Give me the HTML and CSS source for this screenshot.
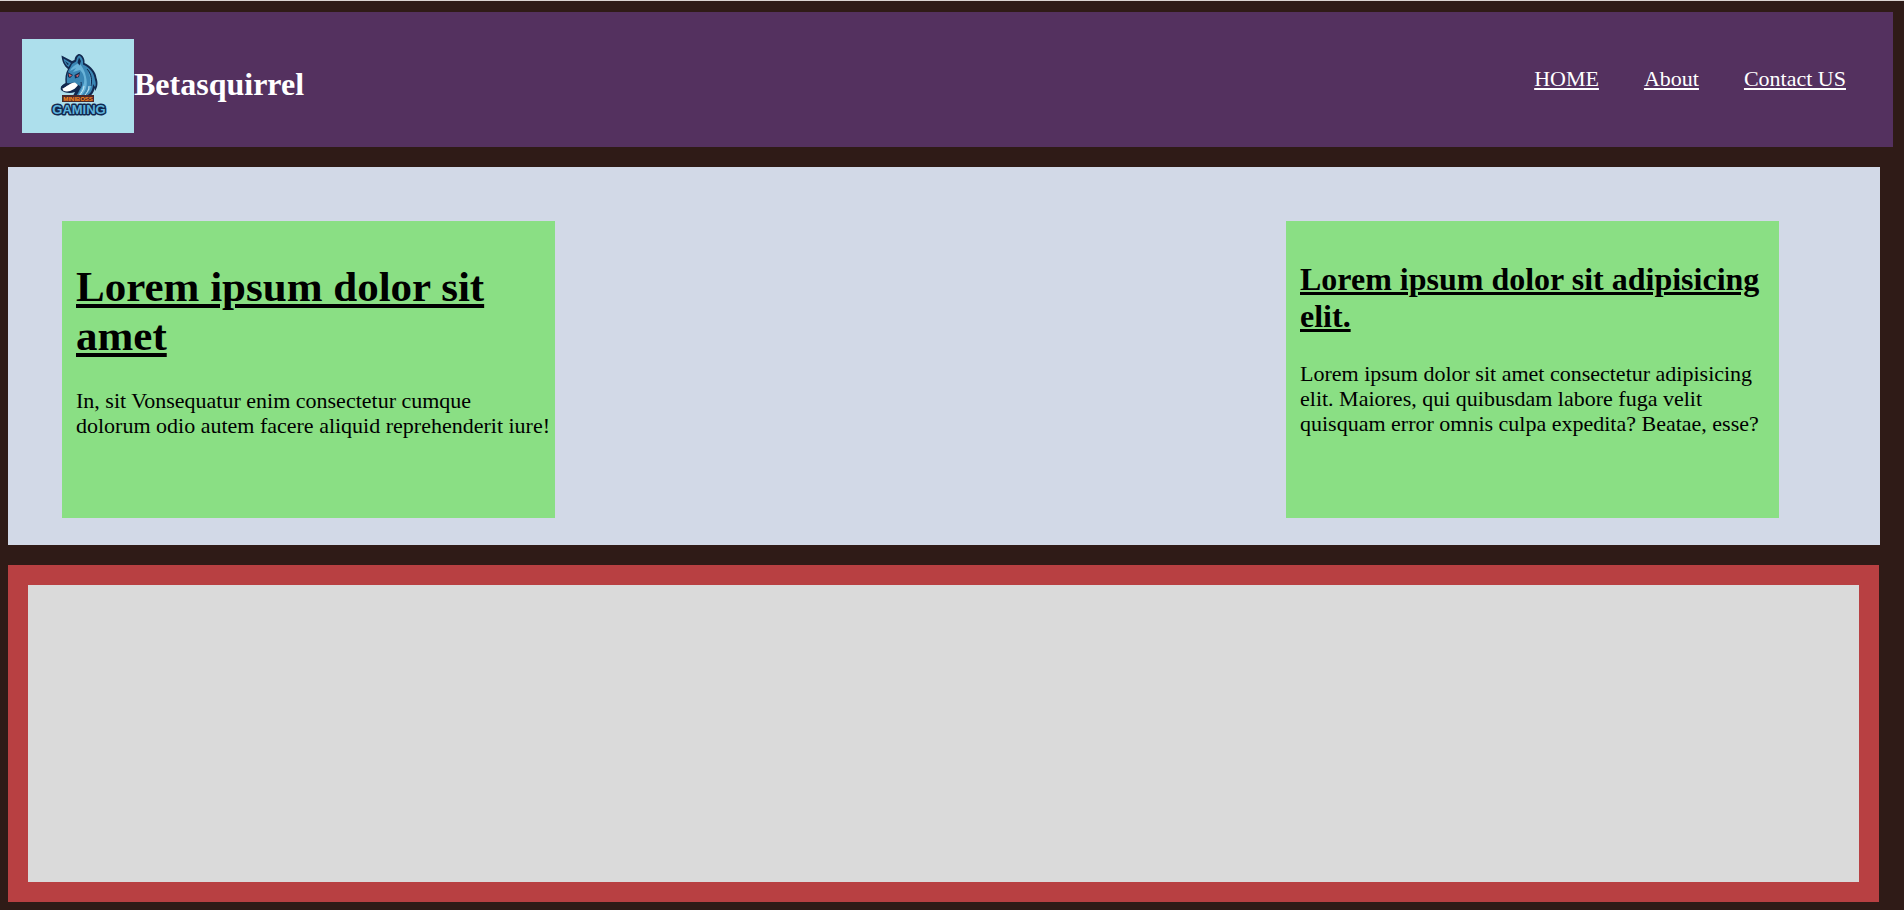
FILE: index.html
```html
<!DOCTYPE html>
<html lang="en">
<head>
<meta charset="utf-8">
<title>Betasquirrel</title>
<link rel="stylesheet" href="styles.css">
</head>
<body>
<header class="site-header">
  <div class="brand">
    <svg class="logo" viewBox="0 0 112 94" role="img" aria-label="Miniboss Gaming">
      <rect width="112" height="94" fill="#addfec"/>
      <path fill="#12294f" d="M39.500 16.500L50 22L52.500 21C53 17.500 55 15 57.500 15C61 16 63 20 62.500 24C69 27 74 33 74.500 39C76 43 76 48 73 52L72.500 49C72 54 69 57 65 59H49C51 57 52 55 53 53C48 55 42 54 39 51C38 48 40 46 43.500 44C43 39 43.500 34 46 30C42 27 40 22 39.500 16.500Z"/>
      <path fill="#3a86b4" d="M41.500 19.500L49 24L46.500 28C43.500 26 42 23 41.500 19.500ZM50 25L54 22.500C55 18.500 56 16.500 57.500 16.500C60 18 61.500 21 61 25.500C68 28.500 72 34 73 41C74 44 74 46 73 48L71 45C71 50 69 55 64 57H54C57 53 58 50 58 47L53 44C50 43 47 45 45 44C44.500 39 45 33 48 29Z"/>
      <path fill="#69b3d8" d="M57 24C52 26 49 29 48 32L54 29L51 33L58 31C61 34 63 38 62 44C60 49 58 53 56 57H59C64 52 66 46 64 38C63 32 60 27 57 24ZM66 33C70 40 69 48 64 55C71 50 71 40 66 33Z"/>
      <path fill="#12294f" d="M57 18.500L59 22L57.500 26.500L55.500 23.500ZM43 22L47 25L45.500 26ZM45.500 33L51 36L48 39L46 38ZM52.500 36L58 33L57 38L53 39.500Z"/>
      <path fill="#d4686a" d="M46.500 34.500L50 36.500L47.500 38ZM53.500 37L57 35L56 38Z"/>
      <path fill="#fff" d="M40.500 49C45 48 48 43.500 53 43.500L56 46C53 51 46 54 41 51.500Z"/>
      <path fill="none" stroke="#12294f" stroke-width="1" d="M59 43C60 47 58 51 53 54M65 30C70 35 70 42 69 47"/>
      <path fill="none" stroke="#c8ebf7" stroke-width="1" d="M62 47C62 51 59 54 57 57M67 47C67 51 65 54 62 57"/>
      <path fill="#12294f" d="M39 47.500L43 45L44 47L41 49.500Z"/>
      <path fill="#4a2a2c" d="M40 56H72V63H40Z"/>
      <text class="logo-top" x="56" y="62">MINIBOSS</text>
      <text class="logo-bottom" x="57" y="75">GAMING</text>
    </svg>
    <h2 class="brand-name">Betasquirrel</h2>
  </div>
  <nav class="nav">
    <a href="#">HOME</a>
    <a href="#">About</a>
    <a href="#">Contact US</a>
  </nav>
</header>
<main>
  <section class="intro">
    <article class="card">
      <h1>Lorem ipsum dolor sit amet</h1>
      <p>In, sit Vonsequatur enim consectetur cumque<br>dolorum odio autem facere aliquid reprehenderit iure!</p>
    </article>
    <article class="card">
      <h2>Lorem ipsum dolor sit adipisicing elit.</h2>
      <p>Lorem ipsum dolor sit amet consectetur adipisicing elit. Maiores, qui quibusdam labore fuga velit quisquam error omnis culpa expedita? Beatae, esse?</p>
    </article>
  </section>
  <section class="frame"></section>
</main>
</body>
</html>
```
FILE: styles.css
```css
* { box-sizing: border-box; }

body {
  margin: 0;
  border-top: 1px solid #dcd5d2;
  background: #2f1b17;
  color: #000;
  font-family: "Liberation Serif", "Times New Roman", serif;
  font-size: 22px;
  line-height: 25px;
}

.site-header {
  display: flex;
  justify-content: space-between;
  align-items: flex-start;
  margin: 11px 11px 20px 0;
  padding: 27px 47px 14px 22px;
  background: #54315f;
  color: #fff;
}

.brand {
  display: flex;
  align-items: center;
}

.logo {
  display: block;
  width: 112px;
  height: 94px;
}

.logo-top,
.logo-bottom {
  font-family: "Liberation Sans", Arial, sans-serif;
  font-weight: 700;
  text-anchor: middle;
}

.logo-top {
  font-size: 6px;
  fill: #ff8a1c;
}

.logo-bottom {
  font-size: 13px;
  fill: #5fb4dc;
  paint-order: stroke;
  stroke: #12294f;
  stroke-width: 3px;
  stroke-linejoin: round;
}

.brand-name {
  margin: 0;
  padding-bottom: 4px;
  font-size: 32px;
  line-height: 37px;
}

.nav {
  display: flex;
  gap: 45px;
  padding-top: 27px;
}

.nav a { color: inherit; }

.intro {
  display: flex;
  justify-content: space-between;
  margin: 0 24px 20px 8px;
  padding: 54px 101px 27px 54px;
  background: #d2d9e7;
}

.card {
  width: 493px;
  min-height: 297px;
  padding: 13px 4px 13px 14px;
  background: #8adf84;
}

.card h1,
.card h2 { text-decoration: underline; }

.card h1 {
  margin: 28px 0;
  font-size: 43px;
  line-height: 49px;
}

.card h2 {
  margin: 27px 0 26px;
  font-size: 32px;
  line-height: 37px;
}

.card p { margin: 0; }

.frame {
  min-height: 337px;
  margin: 0 25px 8px 8px;
  border: 20px solid #b84042;
  background: #dadada;
}
```
